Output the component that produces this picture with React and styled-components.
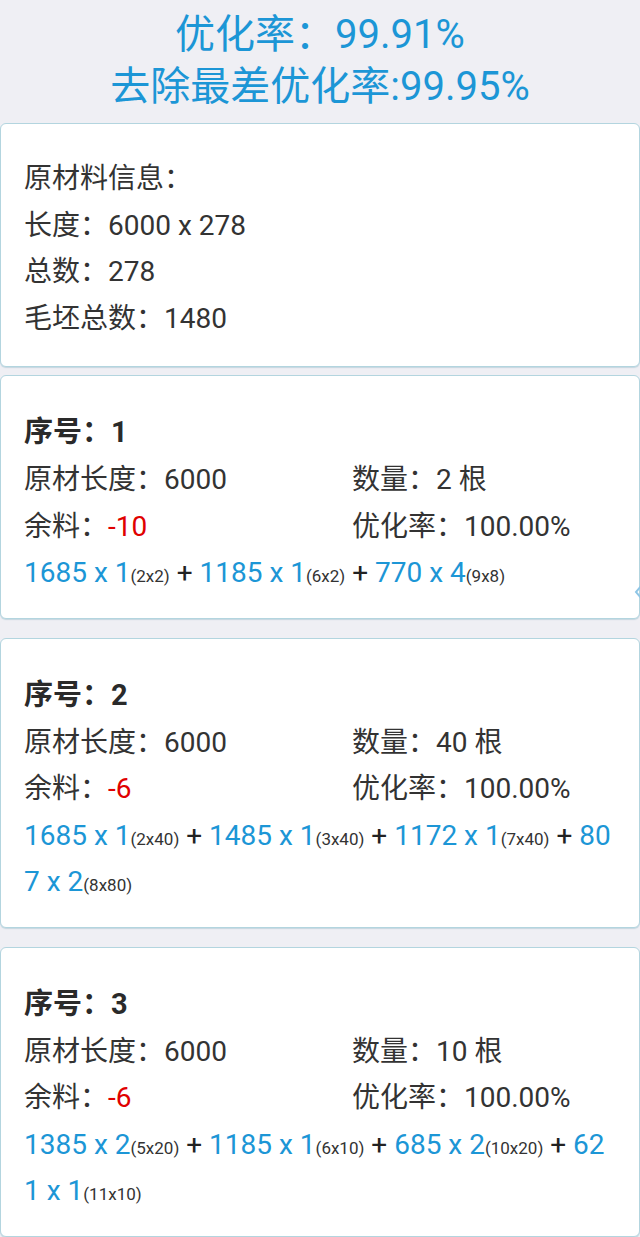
import React from "react";
import styled, { createGlobalStyle } from "styled-components";

const GlobalStyle = createGlobalStyle`
  html, body {
    margin: 0;
    padding: 0;
    background: #efeff4;
  }
  body {
    font-family: Roboto, "Noto Sans CJK SC", sans-serif;
    color: #333;
  }
`;

const Page = styled.div`
  position: relative;
  width: 640px;
  background: #efeff4;
  overflow: hidden;
`;

const Header = styled.header`
  display: flex;
  flex-direction: column;
  align-items: center;
  padding: 9px 0 10px;
  color: #1c96d6;
  font-size: 40px;
  line-height: 52px;
`;

const List = styled.div`
  display: flex;
  flex-direction: column;
  gap: 19px;
`;

const Card = styled.section`
  background: #fff;
  border: 1px solid #b3d5df;
  border-radius: 6px;
  padding: ${(p) => (p.$info ? "32px 23px 24px" : "31px 23px 21px")};
  margin-bottom: ${(p) => (p.$info ? "-11px" : "0")};
  font-size: 28px;
  line-height: 46.5px;
  box-shadow: 0 1px 1px rgba(120, 170, 190, 0.35);
`;

const Line = styled.div`
  white-space: nowrap;
`;

const Title = styled.div`
  font-size: 29px;
  font-weight: bold;
  color: #2a2a2a;
  line-height: 50px;
`;

const Pair = styled.div`
  display: grid;
  grid-template-columns: 328px 1fr;
  white-space: nowrap;
`;

const Red = styled.span`
  color: #e00000;
`;

const Formula = styled.div`
  word-break: break-all;
  color: #222;
`;

const Piece = styled.span`
  color: #1c96d6;
`;

const Sub = styled.span`
  font-size: 17px;
  line-height: 0;
  color: #333;
`;

const Plus = styled.span`
  color: #222;
`;

const EdgeHandle = styled.svg`
  position: absolute;
  right: -2px;
  top: 584px;
`;

const groups = [
  {
    no: 1,
    qty: 2,
    rest: -10,
    parts: [
      ["1685 x 1", "(2x2)"],
      ["1185 x 1", "(6x2)"],
      ["770 x 4", "(9x8)"],
    ],
  },
  {
    no: 2,
    qty: 40,
    rest: -6,
    parts: [
      ["1685 x 1", "(2x40)"],
      ["1485 x 1", "(3x40)"],
      ["1172 x 1", "(7x40)"],
      ["807 x 2", "(8x80)"],
    ],
  },
  {
    no: 3,
    qty: 10,
    rest: -6,
    parts: [
      ["1385 x 2", "(5x20)"],
      ["1185 x 1", "(6x10)"],
      ["685 x 2", "(10x20)"],
      ["621 x 1", "(11x10)"],
    ],
  },
];

function GroupCard({ g }) {
  return (
    <Card>
      <Title>序号：{g.no}</Title>
      <Pair>
        <span>原材长度：6000</span>
        <span>数量：{g.qty} 根</span>
      </Pair>
      <Pair>
        <span>
          余料：<Red>{g.rest}</Red>
        </span>
        <span>优化率：100.00%</span>
      </Pair>
      <Formula>
        {g.parts.map(([main, sub], i) => (
          <React.Fragment key={i}>
            {i > 0 && <Plus> + </Plus>}
            <Piece>{main}</Piece>
            <Sub>{sub}</Sub>
          </React.Fragment>
        ))}
      </Formula>
    </Card>
  );
}

export default function App() {
  return (
    <Page>
      <GlobalStyle />
      <Header>
        <div>优化率：99.91%</div>
        <div>去除最差优化率:99.95%</div>
      </Header>
      <List>
        <Card $info>
          <Line>原材料信息：</Line>
          <Line>长度：6000 x 278</Line>
          <Line>总数：278</Line>
          <Line>毛坯总数：1480</Line>
        </Card>
        {groups.map((g) => (
          <GroupCard key={g.no} g={g} />
        ))}
      </List>
      <EdgeHandle width="8" height="16" viewBox="0 0 8 16">
        <path d="M7 2 L2 8 L7 14" fill="none" stroke="#8fc6e6" strokeWidth="2" />
      </EdgeHandle>
    </Page>
  );
}
